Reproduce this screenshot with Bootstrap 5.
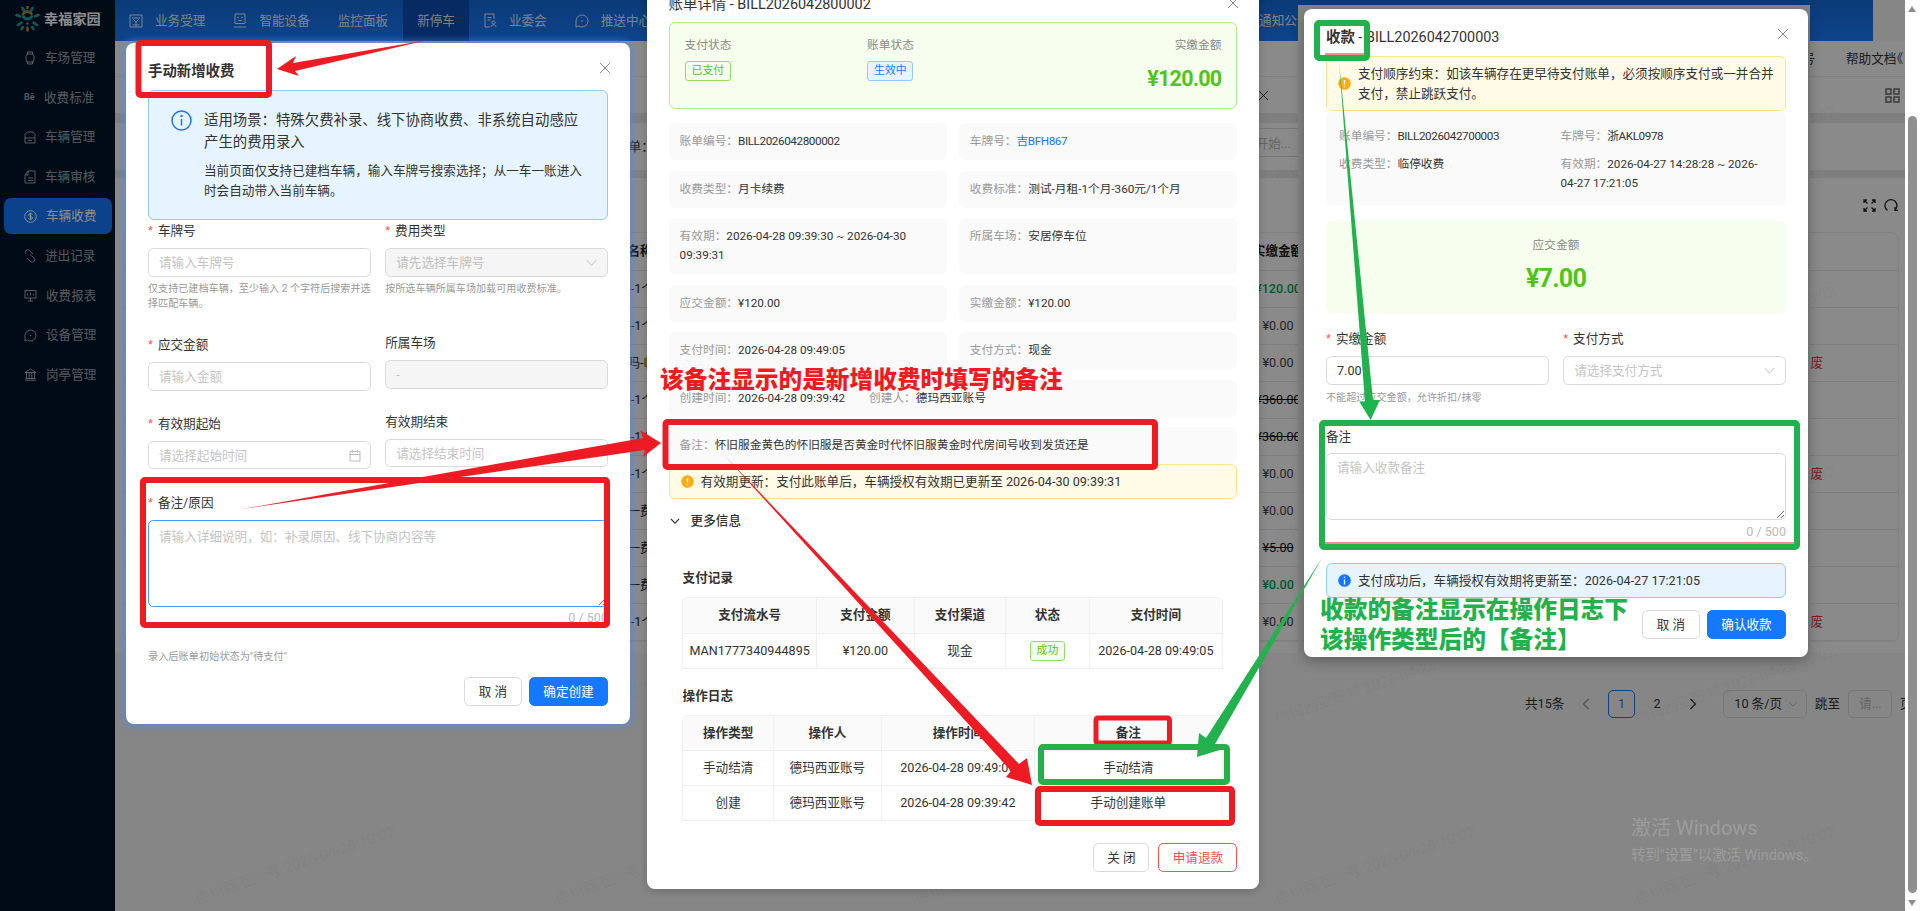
<!DOCTYPE html>
<html lang="zh-CN">
<head>
<meta charset="utf-8">
<title>车辆收费</title>
<link href="https://cdn.jsdelivr.net/npm/bootstrap@5.3.0/dist/css/bootstrap.min.css" rel="stylesheet">
<style>
html,body{width:1920px;height:911px;overflow:hidden;margin:0}
body{font-family:Roboto,"Noto Sans CJK SC",sans-serif;font-size:12.6px;color:#333;background:#f5f5f5;line-height:20px}
.stage{width:1920px;height:911px;position:relative;overflow:hidden}
.side{width:115px;background:#001529;flex:none}
.side-logo{height:40px;padding-left:15px;gap:4px;color:#fff;font-weight:700;font-size:14.2px;padding-bottom:3px}
.side-item{height:36px;margin:0 3px 3.6px 4px;padding-left:20px;gap:9px;color:rgba(255,255,255,.62);border-radius:7px}
.side-item.on{background:#1677ff;color:#fff}
.side-item svg,.top-item svg{flex:none}
.be{width:14px;font-size:9px;font-weight:700;line-height:1}
.pg{width:1790px;flex:none;overflow:hidden}
.topb{width:1758px;height:41px;background:linear-gradient(#1469d8,#1b7dff);color:rgba(255,255,255,.9)}
.top-item{padding:0 14px;gap:12px;height:41px}
.top-item.on{background:#0b4fb5;margin-left:1px}
.top-far{margin-left:590px;padding-left:4px}
.hrow{height:36px;background:#fcfcfc;border-bottom:1px solid #e9e9e9}
.hrow2{height:36px;background:#fcfcfc}
.band{height:10px;background:#e8e8e8}
.band2{height:8px;background:#e8e8e8}
.filt{height:47px;background:#fcfcfc;padding-left:501px}
.rng{width:200px;height:29px;margin-left:447px;border-top:1px solid #d9d9d9;border-bottom:1px solid #d9d9d9;text-align:right;padding-right:10px;color:#bbb;line-height:29px;margin-top:-9px}
.tool{height:54px;background:#fcfcfc;gap:8px;padding-right:7px}
.bgwrap{background:#fcfcfc;padding:0 6px 11px 8px}
.bgbox{border:1px solid #ececec;border-radius:8px;overflow:hidden}
.bgt{table-layout:fixed;width:1776px;margin:0;border-collapse:collapse}
.bgt th,.bgt td{height:37px;padding:0;border-bottom:1px solid #e6e6e6;vertical-align:middle;background:transparent;font-size:12.6px}
.bgt th{font-weight:700;color:#222}
.ca{width:453px}.cb{width:661px}.cc{width:80px}.cd{width:480px}.ce{width:102px}
.cm{text-align:center;color:#444}
.ye{color:#00a350!important;font-weight:500}
.stk{text-decoration:line-through;color:#111!important}
.fei{color:#e03a3a!important}
.pagi{margin-top:37px;gap:8px;width:1790px;padding-left:1410px;white-space:nowrap}
.pi{width:27.5px;height:28px;border-radius:5px;text-align:center;line-height:28px;flex:none}
.pi.on{border:1px solid #1677ff;color:#1677ff;line-height:26px}
.psel{width:83.5px;height:28px;border:1px solid #d9d9d9;border-radius:5px;padding:0 8px 0 10px;margin-left:9px;flex:none}
.pin{width:44px;height:28px;border:1px solid #d9d9d9;border-radius:5px;color:#bbb;padding-left:10px;line-height:26px;flex:none}
.mask{position:absolute;left:0;top:0;width:1905px;height:911px;background:rgba(0,0,0,.45)}
.wmk{position:absolute;left:115px;top:55px;width:1790px;display:grid;grid-template-columns:repeat(5,360px);grid-auto-rows:180px;pointer-events:none;overflow:hidden}
.wmk span{display:flex;align-items:center;justify-content:center;white-space:nowrap;transform:rotate(-19deg);font-size:15px;color:rgba(0,0,0,.055)}
.vbar{position:absolute;right:0;top:0;width:15px;height:911px;background:#fff}
.vthumb{position:absolute;left:3px;top:116px;width:9px;height:777px;background:#8f8f8f;border-radius:5px}
.varr{position:absolute;left:3px;width:0;height:0;border-left:4.5px solid transparent;border-right:4.5px solid transparent}
.vup{top:6px;border-bottom:6px solid #8f8f8f}.vdn{bottom:5px;border-top:6px solid #8f8f8f}
.win{position:absolute;background:#fff;border:0;border-radius:8px;color:#333}
.w1{left:126px;top:43px;width:504px;height:681px;padding:19px 22px 0;box-shadow:0 0 6px 3px rgba(70,140,240,.55)}
.w2{left:647px;top:-20px;width:612px;height:909px;padding:15px 21.6px 0;box-shadow:0 2px 8px rgba(0,0,0,.2)}
.w3{left:1304px;top:9px;width:504px;height:648px;padding:19px 22px 0;box-shadow:0 4px 14px rgba(0,0,0,.3)}
.patch{position:absolute;left:1298px;top:5px;width:512px;height:658px;background:#858585}
.ttl{font-size:14.4px;font-weight:400;line-height:20px;margin:0;color:#333}
.ttl b{font-weight:700}
.xbtn{position:absolute;width:12px;height:12px}
.x1{right:19px;top:19px}.x2{right:20px;top:17px}.x3{right:19px;top:19px}
.al{border-radius:6px;margin:0;padding:0;border:1px solid;display:flex}
.al-b{background:#e6f4ff;border-color:#91caff}
.al-y{background:#fffbe6;border-color:#ffe58f}
.al1{margin-top:8px;height:130px;padding:19px 23px 0 22px;gap:12px}
.al1 .h1t{font-size:14.4px;line-height:22px}
.al1 .d1t{margin-top:7px;line-height:20px}
.lb{height:20px;display:block;margin:0;white-space:nowrap}
.req::before{content:"*";color:#ff4d4f;margin-right:5px;font-family:"Liberation Sans",sans-serif}
.fc{height:29px;min-height:0;padding:0 10px;font-size:12.6px;border:1px solid #d9d9d9;border-radius:5.4px;color:#333;margin-top:7px;line-height:27px;box-shadow:none}
.fc::placeholder{color:#c4c4c4;opacity:1}
.fc:disabled,.fc[readonly]{background-color:#f5f5f5;color:#c0c0c0}
select.fc{background-size:11px;background-position:right 10px center;background-image:url("data:image/svg+xml,%3csvg xmlns='http://www.w3.org/2000/svg' viewBox='0 0 12 12'%3e%3cpath fill='none' stroke='%23bbb' stroke-width='1' d='M1 3.5l5 5.5 5-5.5'/%3e%3c/svg%3e")}
.ph{color:#c4c4c4}
.rw{--bs-gutter-x:14.4px;--bs-gutter-y:0}
.hp{font-size:10.1px;line-height:15px;color:#999;margin-top:4px}
.r1{margin-top:1px}
.r2{margin-top:21.5px}
.r3{margin-top:21.5px}
.pt2{padding-top:2px}
.fc.h28{height:28px}
.cal{right:10px;top:8px}
.rem{margin-top:24px}
.ta1{height:87px;border-color:#4096ff;padding:6px 10px;line-height:20px;resize:vertical}
.cnt{text-align:right;color:#bbb;line-height:20px;margin-top:1px}
.foot1{font-size:10.2px;color:#999;margin-top:19px;line-height:20px}
.bq{height:29px;padding:0;font-size:12.6px;border-radius:5.4px;line-height:27px;flex:none}
.b-df{background:#fff;border:1px solid #d9d9d9;color:#333;width:58px}
.b-pr{background:#1677ff;border:1px solid #1677ff;color:#fff;width:79px}
.b-dn{background:#fff;border:1px solid #ff4d4f;color:#ff4d4f;width:79px}
.ft1{margin-top:10px;gap:7px}
.sumb{margin-top:7px;height:87px;background:#f6ffed;border:1px solid #b7eb8f;border-radius:6px;padding:12px 15px}
.gl{color:#888;line-height:20px;font-size:11.7px}
.tg{height:20px;font-size:10.8px;font-weight:400;padding:0 6px;line-height:18px;border-radius:3px;border:1px solid;margin-top:6px;display:inline-block}
.tg-g{background:#f6ffed;border-color:#95de64;color:#52c41a}
.tg-b{background:#e6f4ff;border-color:#91caff;color:#1677ff}
.c1{width:182.5px}
.amt{color:#52c41a;font-weight:700;font-size:21.6px;letter-spacing:-.8px;line-height:30px;margin-top:9px}
.ig{display:grid;grid-template-columns:1fr 1fr;gap:10.5px 11.5px;margin-top:14px;font-size:11.7px;line-height:19px}
.cell{background:#fafafa;border-radius:6px;padding:9px 11px}
.span2{grid-column:1/3}
.lbl{color:#999}
.lnk{color:#1677ff}
.nv{letter-spacing:-.4px}
.al2{height:35px;padding-left:11px;gap:7px;align-items:center}
.more{margin-top:12px;gap:11px;font-weight:500;height:20px;padding-left:1px}
.sec{font-weight:700;line-height:20px;margin:37px 0 9px 14px}
.sec.s2{margin-top:17px}
.tw{margin:0 14.6px 0 13.8px;border-radius:6px 6px 0 0;overflow:hidden;border:1px solid #f0f0f0;border-bottom:0}
.dt{table-layout:fixed;margin:0;width:100%;border-collapse:collapse}
.dt th,.dt td{padding:0;text-align:center;vertical-align:middle;border:1px solid #f0f0f0;font-size:12.6px;color:#333;white-space:nowrap;background:#fff}
.dt tr>*:first-child{border-left:0}.dt tr>*:last-child{border-right:0}.dt thead th{border-top:0;background:#fafafa;font-weight:700;height:35px}
.dt td{height:35px}
.t1a{width:133px}.t1b{width:98px}.t1c{width:91px}.t1d{width:84px}
.t2a{width:90px}.t2b{width:108px}.t2c{width:153px}
.ft2{margin-top:22px;gap:9px}
.b-df2{width:56px}
.al3{margin-top:8px;height:55px;padding-left:11px;gap:7px;align-items:center;line-height:20px}
.gbox{margin-top:1px;height:94px;background:#fafafa;border-radius:6px;padding:14.5px 13px;font-size:11.7px;line-height:19px;display:grid;grid-template-columns:221.5px 1fr;row-gap:9px}
.lime{margin-top:15px;height:92px;background:#f6ffed;border-radius:6px;text-align:center;padding-top:14px}
.amt2{color:#52c41a;font-weight:700;font-size:25.2px;letter-spacing:-.8px;line-height:34px;margin-top:7px}
.w3 .lb1{margin-top:16px}
.w3 .fc{margin-top:7px}
.w3 .hp{margin-top:4.5px}
.lb2{margin-top:22.5px}
.w3 .ta2{height:67px;padding:4px 10px;line-height:20px;margin-top:6px}
.w3 .cnt{margin-top:2px}
.al4{margin-top:21px;height:35px;padding-left:11px;gap:7px;align-items:center}
.ft3{margin-top:12px;gap:7px}
.anno{position:absolute;left:0;top:0;width:1920px;height:911px;pointer-events:none}
.nt{position:absolute;font-family:"Noto Sans CJK SC",sans-serif;font-weight:900;font-size:23.7px;line-height:30px;white-space:nowrap}
.nt-r{left:660px;top:363px;color:#ed1c24}
.nt-g{left:1320px;top:593px;color:#22b14c}
.winact{position:absolute;left:1631px;top:814px;color:rgba(255,255,255,.2);white-space:nowrap}
.wa1{font-size:20px;line-height:28px}
.wa2{font-size:14.4px;line-height:20px;margin-top:4px}
.gk{margin-left:-6px}
</style>
</head>
<body>
<div class="stage">
  <div class="d-flex" style="height:911px">
    <aside class="side">
      <div class="side-logo d-flex align-items-center">
        <svg width="25" height="26" viewBox="0 0 25 26"><g fill="none" stroke-width="2.6" stroke-linecap="round"><path stroke="#1fa3a8" d="M8.300 10.500a4.800 4.800 0 0 0 8.400 0M12.500 17.500v.01"/><path stroke="#c98a20" d="M8 8a5 5 0 0 1 8.500 0"/><path stroke="#1fa3a8" d="M7.500 2l2 3.500M17.500 2l-2 3.500M1.500 9l3.500 1.300M23.500 9L20 10.300M3 19l3.500-2.400M22 19l-3.500-2.400"/><path stroke="#c98a20" d="M12.500 1v1M12.500 22v2.500"/><path stroke="#1fa3a8" d="M6.500 23l1.500-2M18.500 23L17 21"/></g></svg>
        <span>幸福家园</span>
      </div>
      <div class="side-item d-flex align-items-center"><svg width="12" height="14" viewBox="0 0 12 14" fill="none" stroke="currentColor"><rect x="2" y="3" width="8" height="8" rx="2.500"/><path d="M3.500 3V1h5v2M3.500 11v2h5v-2"/></svg><span>车场管理</span></div>
      <div class="side-item d-flex align-items-center"><span class="be">Bē</span><span style="margin-left:-3px">收费标准</span></div>
      <div class="side-item d-flex align-items-center"><svg width="12" height="13" viewBox="0 0 12 13" fill="none" stroke="currentColor"><path d="M1 12V3.500L3 1h6l2 2.500V12zM1 7h10M4 9.500h4"/></svg><span>车辆管理</span></div>
      <div class="side-item d-flex align-items-center"><svg width="12" height="14" viewBox="0 0 12 14" fill="none" stroke="currentColor"><path d="M1 13V5l3-4h7v12zM4 1v4H1M4 8h5M4 10.500h5"/></svg><span>车辆审核</span></div>
      <div class="side-item on d-flex align-items-center"><svg width="13" height="13" viewBox="0 0 13 13" fill="none" stroke="currentColor"><circle cx="6.500" cy="6.500" r="5.800"/><path d="M8.500 4.500C7.500 3.300 4.600 3.500 4.600 5.100c0 1.900 3.900 1 3.900 2.900 0 1.600-3 1.700-4.100.5M6.500 2.700v7.600"/></svg><span>车辆收费</span></div>
      <div class="side-item d-flex align-items-center"><svg width="12" height="14" viewBox="0 0 12 14" fill="none" stroke="currentColor"><path d="M2 5a2.500 2.500 0 0 1 0-3.500 2.500 2.500 0 0 1 3.500 0L9 5M3 9l3.500 3.500a2.500 2.500 0 0 0 3.500 0 2.500 2.500 0 0 0 0-3.500L6 5.500"/></svg><span>进出记录</span></div>
      <div class="side-item d-flex align-items-center"><svg width="13" height="13" viewBox="0 0 13 13" fill="none" stroke="currentColor"><rect x="1" y="1.500" width="11" height="7.500"/><path d="M3.500 6.500v-2M6.500 6.500v-3M9.500 6.500V5M4 12h5M6.500 9v3"/></svg><span>收费报表</span></div>
      <div class="side-item d-flex align-items-center"><svg width="13" height="13" viewBox="0 0 13 13" fill="none" stroke="currentColor"><path d="M1 6.500a5.500 5.500 0 1 1 2.500 4.600L1 12z"/><circle cx="6.500" cy="6.500" r=".4"/></svg><span>设备管理</span></div>
      <div class="side-item d-flex align-items-center"><svg width="13" height="13" viewBox="0 0 13 13" fill="none" stroke="currentColor"><path d="M1 4.500L6.500 1 12 4.500zM2.500 4.500v6M5.200 4.500v6M7.800 4.500v6M10.500 4.500v6M1 12.200h11M1.500 10.500h10"/></svg><span>岗亭管理</span></div>
    </aside>
    <main class="pg">
      <nav class="topb d-flex align-items-center">
        <div class="top-item d-flex align-items-center"><svg width="14" height="14" viewBox="0 0 14 14" fill="none" stroke="currentColor"><path d="M1 1h12v12H1zM3 4h8M4.500 5.500L7 8l2.500-2.500M7 8v3M4 11h6"/></svg><span>业务受理</span></div>
        <div class="top-item d-flex align-items-center"><svg width="14" height="15" viewBox="0 0 14 15" fill="none" stroke="currentColor"><path d="M2 1h10v9.500H2zM1 14h12M5 7.500h4"/><circle cx="5" cy="4.500" r=".4"/><circle cx="9" cy="4.500" r=".4"/></svg><span>智能设备</span></div>
        <div class="top-item d-flex align-items-center"><span>监控面板</span></div>
        <div class="top-item on d-flex align-items-center"><span>新停车</span></div>
        <div class="top-item d-flex align-items-center"><svg width="14" height="15" viewBox="0 0 14 15" fill="none" stroke="currentColor"><path d="M11 6V1H2v13h5M4.500 4.500h4M4.500 7h3"/><circle cx="10.500" cy="9.500" r="1.600"/><path d="M8 14c0-3 5-3 5 0"/></svg><span>业委会</span></div>
        <div class="top-item d-flex align-items-center"><svg width="14" height="14" viewBox="0 0 14 14" fill="none" stroke="currentColor"><path d="M1 7a6 6 0 1 1 2.700 5L1 13z"/><circle cx="7" cy="7" r=".4"/></svg><span>推送中心</span></div>
        <div class="top-item top-far d-flex align-items-center"><span>通知公告</span></div>
      </nav>
      <div class="hrow d-flex align-items-center justify-content-end text-nowrap"><span style="margin-right:31px">账号</span><span style="width:59px;overflow:hidden;flex:none">帮助文档<span class="gk">《</span></span></div>
      <div class="hrow2 d-flex align-items-center"><span style="margin-left:1085px">车辆收费</span><svg class="ms-2" width="11" height="11" viewBox="0 0 11 11" stroke="#333"><path d="M1 1l9 9M10 1l-9 9"/></svg>
        <svg class="ms-auto" style="margin-right:5px" width="15" height="15" viewBox="0 0 15 15" fill="none" stroke="#555" stroke-width="1.300"><rect x="1" y="1" width="5" height="5"/><rect x="9" y="1" width="5" height="5"/><rect x="1" y="9" width="5" height="5"/><rect x="9" y="9" width="5" height="5"/></svg></div>
      <div class="band"></div>
      <div class="filt d-flex align-items-center"><span>账单：</span><div class="rng">请选择开始...</div></div>
      <div class="band2"></div>
      <div class="tool d-flex align-items-center justify-content-end">
        <svg width="13" height="13" viewBox="0 0 13 13" fill="none" stroke="#222" stroke-width="1.300"><path d="M1 4V1h3M9 1h3v3M12 9v3H9M4 12H1V9M1.500 1.500L4.500 4.500M11.500 1.500L8.500 4.500M11.500 11.500L8.500 8.500M1.500 11.500L4.500 8.500"/></svg>
        <svg width="14" height="14" viewBox="0 0 14 14" fill="none" stroke="#222" stroke-width="1.300"><path d="M3.500 12.500A6 6 0 1 1 11 12M11 9v3.300h3"/></svg>
      </div>
      <div class="bgwrap"><div class="bgbox">
        <table class="bgt table">
          <colgroup><col class="ca"><col class="cb"><col class="cc"><col class="cd"><col class="ce"></colgroup>
          <thead><tr><th></th><th>收费标准名称</th><th class="text-center">实缴金额</th><th></th><th></th></tr></thead>
          <tbody>
            <tr><td></td><td>测试-月租-1个月-360元/1个月</td><td class="cm ye">¥120.00</td><td></td><td></td></tr>
            <tr><td></td><td>测试-月租-1个月-360元/1个月</td><td class="cm">¥0.00</td><td></td><td></td></tr>
            <tr><td></td><td>测试哈哈吗-临停</td><td class="cm">¥0.00</td><td></td><td class="fei">作废</td></tr>
            <tr><td></td><td>测试-月租-1个月-360元/1个月</td><td class="cm stk">¥360.00</td><td></td><td></td></tr>
            <tr><td></td><td>测试-月租-1个月-360元/1个月</td><td class="cm stk">¥360.00</td><td></td><td></td></tr>
            <tr><td></td><td>测试-月租-1个月-360元/1个月</td><td class="cm">¥0.00</td><td></td><td class="fei">作废</td></tr>
            <tr><td></td><td>测试月卡一费用</td><td class="cm">¥0.00</td><td></td><td></td></tr>
            <tr><td></td><td>测试月卡一费用</td><td class="cm stk">¥5.00</td><td></td><td></td></tr>
            <tr><td></td><td>测试月卡一费用</td><td class="cm ye">¥0.00</td><td></td><td></td></tr>
            <tr><td></td><td>测试-月租-1个月-360元/1个月</td><td class="cm">¥0.00</td><td></td><td class="fei">作废</td></tr>
          </tbody>
        </table>
      </div></div>
      <div class="pagi d-flex align-items-center">
        <span>共15条</span>
        <span class="pi"><svg width="8" height="12" viewBox="0 0 8 12" fill="none" stroke="#999" stroke-width="1.300"><path d="M6.500 1L1.500 6l5 5"/></svg></span>
        <span class="pi on">1</span><span class="pi">2</span>
        <span class="pi"><svg width="8" height="12" viewBox="0 0 8 12" fill="none" stroke="#333" stroke-width="1.300"><path d="M1.500 1l5 5-5 5"/></svg></span>
        <span class="psel d-flex align-items-center justify-content-between">10 条/页<svg width="10" height="10" viewBox="0 0 10 10" fill="none" stroke="#bbb"><path d="M1 3l4 4 4-4"/></svg></span>
        <span>跳至</span><span class="pin">请...</span><span>页</span>
      </div>
    </main>
  </div>
  <div class="wmk">
    <span>德玛西亚账号 2026-04-28 10:02</span><span>德玛西亚账号 2026-04-28 10:02</span><span>德玛西亚账号 2026-04-28 10:02</span><span>德玛西亚账号 2026-04-28 10:02</span><span>德玛西亚账号 2026-04-28 10:02</span>
    <span>德玛西亚账号 2026-04-28 10:02</span><span>德玛西亚账号 2026-04-28 10:02</span><span>德玛西亚账号 2026-04-28 10:02</span><span>德玛西亚账号 2026-04-28 10:02</span><span>德玛西亚账号 2026-04-28 10:02</span>
    <span>德玛西亚账号 2026-04-28 10:02</span><span>德玛西亚账号 2026-04-28 10:02</span><span>德玛西亚账号 2026-04-28 10:02</span><span>德玛西亚账号 2026-04-28 10:02</span><span>德玛西亚账号 2026-04-28 10:02</span>
    <span>德玛西亚账号 2026-04-28 10:02</span><span>德玛西亚账号 2026-04-28 10:02</span><span>德玛西亚账号 2026-04-28 10:02</span><span>德玛西亚账号 2026-04-28 10:02</span><span>德玛西亚账号 2026-04-28 10:02</span>
    <span>德玛西亚账号 2026-04-28 10:02</span><span>德玛西亚账号 2026-04-28 10:02</span><span>德玛西亚账号 2026-04-28 10:02</span><span>德玛西亚账号 2026-04-28 10:02</span><span>德玛西亚账号 2026-04-28 10:02</span>
  </div>
  <div class="mask"></div>
  <div class="vbar"><span class="varr vup"></span><span class="vthumb"></span><span class="varr vdn"></span></div>
  <div class="winact"><div class="wa1">激活 Windows</div><div class="wa2">转到"设置"以激活 Windows。</div></div>
  <div class="patch"></div>

  <!-- 手动新增收费 -->
  <section class="win w1 card">
    <svg class="xbtn x1" viewBox="0 0 12 12" stroke="#888"><path d="M1 1l10 10M11 1L1 11"/></svg>
    <h5 class="ttl"><b>手动新增收费</b></h5>
    <div class="al al-b al1">
      <svg width="21" height="21" viewBox="0 0 21 21" fill="none" stroke="#1677ff" stroke-width="1.500" style="flex:none"><circle cx="10.500" cy="10.500" r="9.500"/><path d="M10.500 9v6.500"/><circle cx="10.500" cy="6" r=".5"/></svg>
      <div><div class="h1t">适用场景：特殊欠费补录、线下协商收费、非系统自动感应产生的费用录入</div><div class="d1t">当前页面仅支持已建档车辆，输入车牌号搜索选择；从一车一账进入时会自动带入当前车辆。</div></div>
    </div>
    <div class="row rw r1">
      <div class="col-6"><label class="lb req">车牌号</label><input class="form-control fc" placeholder="请输入车牌号"><div class="hp">仅支持已建档车辆，至少输入 2 个字符后搜索并选择匹配车辆。</div></div>
      <div class="col-6"><label class="lb req">费用类型</label><select class="form-select fc" disabled><option>请先选择车牌号</option></select><div class="hp">按所选车辆所属车场加载可用收费标准。</div></div>
    </div>
    <div class="row rw r2">
      <div class="col-6 pt2"><label class="lb req">应交金额</label><input class="form-control fc" placeholder="请输入金额"></div>
      <div class="col-6"><label class="lb">所属车场</label><input class="form-control fc" value="-" disabled></div>
    </div>
    <div class="row rw r3">
      <div class="col-6 pt2"><label class="lb req">有效期起始</label><div class="position-relative"><input class="form-control fc h28" placeholder="请选择起始时间"><svg class="position-absolute cal" width="12" height="13" viewBox="0 0 12 13" fill="none" stroke="#bbb"><path d="M1 2.500h10V12H1zM1 5.500h10M3.500 1v2.500M8.500 1v2.500"/></svg></div></div>
      <div class="col-6"><label class="lb">有效期结束</label><input class="form-control fc h28" placeholder="请选择结束时间"></div>
    </div>
    <div class="rem"><label class="lb req">备注/原因</label><textarea class="form-control fc ta1" placeholder="请输入详细说明，如：补录原因、线下协商内容等"></textarea><div class="cnt">0 / 500</div></div>
    <div class="foot1">录入后账单初始状态为"待支付"</div>
    <div class="d-flex justify-content-end ft1"><button class="btn bq b-df" type="button">取 消</button><button class="btn bq b-pr" type="button">确定创建</button></div>
  </section>

  <!-- 账单详情 -->
  <section class="win w2 card">
    <svg class="xbtn x2" viewBox="0 0 12 12" stroke="#888"><path d="M1 1l10 10M11 1L1 11"/></svg>
    <h5 class="ttl">账单详情 - BILL2026042800002</h5>
    <div class="sumb d-flex">
      <div class="c1"><div class="gl">支付状态</div><span class="tg tg-g">已支付</span></div>
      <div class="flex-grow-1"><div class="gl">账单状态</div><span class="tg tg-b">生效中</span></div>
      <div class="text-end"><div class="gl">实缴金额</div><div class="amt">¥120.00</div></div>
    </div>
    <div class="ig">
      <div class="cell"><span class="lbl">账单编号：</span><span class="nv">BILL2026042800002</span></div>
      <div class="cell"><span class="lbl">车牌号：</span><span class="lnk nv">吉BFH867</span></div>
      <div class="cell"><span class="lbl">收费类型：</span>月卡续费</div>
      <div class="cell"><span class="lbl">收费标准：</span>测试-月租-1个月-360元/1个月</div>
      <div class="cell"><span class="lbl">有效期：</span>2026-04-28 09:39:30 ~ 2026-04-30 09:39:31</div>
      <div class="cell"><span class="lbl">所属车场：</span>安居停车位</div>
      <div class="cell"><span class="lbl">应交金额：</span>¥120.00</div>
      <div class="cell"><span class="lbl">实缴金额：</span>¥120.00</div>
      <div class="cell"><span class="lbl">支付时间：</span>2026-04-28 09:49:05</div>
      <div class="cell"><span class="lbl">支付方式：</span>现金</div>
      <div class="cell span2"><span class="lbl">创建时间：</span>2026-04-28 09:39:42<span class="lbl ms-4">创建人：</span>德玛西亚账号</div>
      <div class="cell span2"><span class="lbl">备注：</span>怀旧服金黄色的怀旧服是否黄金时代怀旧服黄金时代房间号收到发货还是</div>
    </div>
    <div class="al al-y al2">
      <svg width="13" height="13" viewBox="0 0 13 13" style="flex:none"><circle cx="6.500" cy="6.500" r="6.300" fill="#faad14"/><path d="M6.500 3v4.500M6.500 9.200v1" stroke="#fff" stroke-width="1.300"/></svg>
      <span>有效期更新：支付此账单后，车辆授权有效期已更新至 2026-04-30 09:39:31</span>
    </div>
    <div class="more d-flex align-items-center"><svg width="10" height="10" viewBox="0 0 10 10" fill="none" stroke="#333" stroke-width="1.100"><path d="M1 3l4 4.200L9 3"/></svg><span>更多信息</span></div>
    <div class="sec">支付记录</div>
    <div class="tw"><table class="dt table">
      <colgroup><col class="t1a"><col class="t1b"><col class="t1c"><col class="t1d"><col></colgroup>
      <thead><tr><th>支付流水号</th><th>支付金额</th><th>支付渠道</th><th>状态</th><th>支付时间</th></tr></thead>
      <tbody><tr><td>MAN1777340944895</td><td>¥120.00</td><td>现金</td><td><span class="tg tg-g m-0">成功</span></td><td>2026-04-28 09:49:05</td></tr></tbody>
    </table></div>
    <div class="sec s2">操作日志</div>
    <div class="tw"><table class="dt table">
      <colgroup><col class="t2a"><col class="t2b"><col class="t2c"><col></colgroup>
      <thead><tr><th>操作类型</th><th>操作人</th><th>操作时间</th><th>备注</th></tr></thead>
      <tbody>
        <tr><td>手动结清</td><td>德玛西亚账号</td><td>2026-04-28 09:49:05</td><td>手动结清</td></tr>
        <tr><td>创建</td><td>德玛西亚账号</td><td>2026-04-28 09:39:42</td><td>手动创建账单</td></tr>
      </tbody>
    </table></div>
    <div class="d-flex justify-content-end ft2"><button class="btn bq b-df b-df2" type="button">关 闭</button><button class="btn bq b-dn" type="button">申请退款</button></div>
  </section>

  <!-- 收款 -->
  <section class="win w3 card">
    <svg class="xbtn x3" viewBox="0 0 12 12" stroke="#888"><path d="M1 1l10 10M11 1L1 11"/></svg>
    <h5 class="ttl"><b>收款</b> - BILL2026042700003</h5>
    <div class="al al-y al3">
      <svg width="13" height="13" viewBox="0 0 13 13" style="flex:none"><circle cx="6.500" cy="6.500" r="6.300" fill="#faad14"/><path d="M6.500 3v4.500M6.500 9.200v1" stroke="#fff" stroke-width="1.300"/></svg>
      <span>支付顺序约束：如该车辆存在更早待支付账单，必须按顺序支付或一并合并支付，禁止跳跃支付。</span>
    </div>
    <div class="gbox">
      <div><span class="lbl">账单编号：</span><span class="nv">BILL2026042700003</span></div>
      <div><span class="lbl">车牌号：</span><span class="nv">浙AKL0978</span></div>
      <div><span class="lbl">收费类型：</span>临停收费</div>
      <div><span class="lbl">有效期：</span>2026-04-27 14:28:28 ~ 2026-04-27 17:21:05</div>
    </div>
    <div class="lime"><div class="gl">应交金额</div><div class="amt2">¥7.00</div></div>
    <div class="row rw">
      <div class="col-6"><label class="lb lb1 req">实缴金额</label><input class="form-control fc" value="7.00"><div class="hp">不能超过应交金额，允许折扣/抹零</div></div>
      <div class="col-6"><label class="lb lb1 req">支付方式</label><select class="form-select fc ph"><option>请选择支付方式</option></select></div>
    </div>
    <label class="lb lb2">备注</label>
    <textarea class="form-control fc ta2" placeholder="请输入收款备注"></textarea>
    <div class="cnt">0 / 500</div>
    <div class="al al-b al4">
      <svg width="13" height="13" viewBox="0 0 13 13" style="flex:none"><circle cx="6.500" cy="6.500" r="6.300" fill="#1677ff"/><path d="M6.500 5.500V10.500M6.500 2.800v1.200" stroke="#fff" stroke-width="1.300"/></svg>
      <span>支付成功后，车辆授权有效期将更新至：2026-04-27 17:21:05</span>
    </div>
    <div class="d-flex justify-content-end ft3"><button class="btn bq b-df" type="button">取 消</button><button class="btn bq b-pr" type="button">确认收款</button></div>
  </section>

  <!-- 标注 -->
  <svg class="anno" viewBox="0 0 1920 911">
    <g fill="none" stroke="#ed1c24" stroke-width="6">
      <rect x="138.500" y="43" width="130.500" height="52" rx="2"/>
      <rect x="143" y="480" width="464" height="145" rx="2"/>
      <rect x="665.500" y="422" width="489.500" height="45" rx="2"/>
      <rect x="1096" y="718" width="73.500" height="25" rx="2" stroke-width="5"/>
      <rect x="1038" y="789" width="194" height="34" rx="2"/>
    </g>
    <g fill="#ed1c24">
      <path d="M277 69L296 56 293 63 428 40 295 71 299 76z"/>
      <path d="M661 443L640 430 643 438 242 509 645 450 643 457z"/>
      <path d="M1032 785L1027 758 1019 764 725 456 1011 771 1006 777z"/>
    </g>
    <g fill="none" stroke="#ed1c24" stroke-width="1">
      <path d="M1325 54h41"/><path d="M1325 543h470"/>
    </g>
    <g fill="none" stroke="#22b14c" stroke-width="6">
      <rect x="1317" y="23" width="50" height="35" rx="2"/>
      <rect x="1322" y="423" width="475" height="124" rx="2"/>
      <rect x="1041" y="747" width="186" height="35" rx="2"/>
    </g>
    <g fill="#22b14c">
      <path d="M1370.600 420L1359.600 402 1365 402 1339 62 1373 400 1380 400z"/>
      <path d="M1197 757L1199 733 1206 738 1322 558 1215 744 1226 748z"/>
    </g>
  </svg>
  <div class="nt nt-r">该备注显示的是新增收费时填写的备注</div>
  <div class="nt nt-g">收款的备注显示在操作日志下<br>该操作类型后的【备注】</div>
</div>
<script src="https://cdn.jsdelivr.net/npm/bootstrap@5.3.0/dist/js/bootstrap.bundle.min.js"></script>
</body>
</html>
